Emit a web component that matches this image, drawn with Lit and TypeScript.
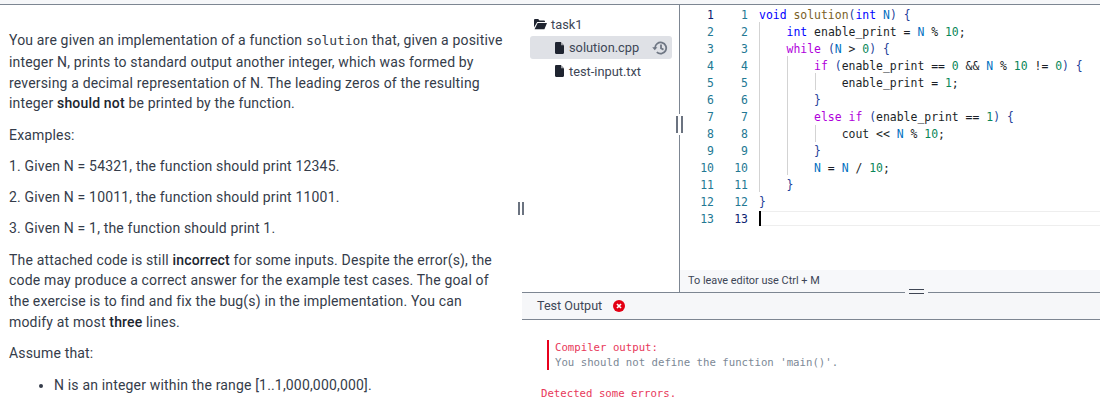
import { LitElement, html, css, svg } from "lit";
import { customElement } from "lit/decorators.js";

type Tok = [string, string];
const code: Tok[][] = [
  [["k", "void"], ["p", " "], ["f", "solution"], ["b", "("], ["k", "int"], ["p", " "], ["n", "N"], ["b", ")"], ["p", " "], ["b", "{"]],
  [["p", "    "], ["k", "int"], ["p", " enable_print = "], ["n", "N"], ["p", " % "], ["d", "10"], ["p", ";"]],
  [["p", "    "], ["c", "while"], ["p", " "], ["b", "("], ["n", "N"], ["p", " > "], ["d", "0"], ["b", ")"], ["p", " "], ["b", "{"]],
  [["p", "        "], ["c", "if"], ["p", " "], ["b", "("], ["p", "enable_print == "], ["d", "0"], ["p", " && "], ["n", "N"], ["p", " % "], ["d", "10"], ["p", " != "], ["d", "0"], ["b", ")"], ["p", " "], ["b", "{"]],
  [["p", "            enable_print = "], ["d", "1"], ["p", ";"]],
  [["p", "        "], ["b", "}"]],
  [["p", "        "], ["c", "else if"], ["p", " "], ["b", "("], ["p", "enable_print == "], ["d", "1"], ["b", ")"], ["p", " "], ["b", "{"]],
  [["p", "            cout << "], ["n", "N"], ["p", " % "], ["d", "10"], ["p", ";"]],
  [["p", "        "], ["b", "}"]],
  [["p", "        "], ["n", "N"], ["p", " = "], ["n", "N"], ["p", " / "], ["d", "10"], ["p", ";"]],
  [["p", "    "], ["b", "}"]],
  [["b", "}"]],
  [],
];

const guides = [
  { left: 11, top: 15, height: 170 },
  { left: 39, top: 49, height: 119 },
  { left: 67, top: 66, height: 17 },
  { left: 67, top: 118, height: 17 },
];

const fileIcon = svg`<svg class="ico" width="11" height="12" viewBox="0 0 11 12"><path fill="#1f2430" d="M1 1.3C1 .6 1.5 0 2.2 0H7l3 3.2v7.6c0 .7-.5 1.2-1.2 1.2H2.2C1.5 12 1 11.5 1 10.8z"/><path fill="#fff" d="M7 0v3.2h3L7.4 0z" opacity=".55"/></svg>`;

@customElement("app-root")
export class AppRoot extends LitElement {
  static styles = css`
    :host { display: block; width: 1100px; height: 409px; overflow: hidden; background: #fff; font-family: Roboto, sans-serif; color: #2a3140; }
    .top { height: 4px; background: #f6f7f9; border-bottom: 1px solid #7d8692; }
    .main { display: grid; grid-template-columns: 522px 1fr; height: 404px; }
    .task { position: relative; padding: 25px 15px 0 9px; font-size: 14px; letter-spacing: .17px; line-height: 20.75px; color: #353c4a; }
    .task p { margin: 0 0 10.5px; }
    .task b { font-weight: 500; color: #20252f; }
    .task code { font-family: "DejaVu Sans Mono", monospace; font-size: 13px; letter-spacing: -.05px; }
    .task ul { margin: 0; padding: 1px 0 0 45px; }
    .v-handle { position: absolute; width: 6px; height: 13px; border-left: 2px solid #6b7380; border-right: 2px solid #6b7380; box-sizing: border-box; }
    .task .v-handle { left: 518px; top: 197px; }
    .right { display: grid; grid-template-rows: 287px 28px 1fr; min-width: 0; }
    .upper { display: grid; grid-template-columns: 158px 1fr; min-height: 0; }
    .tree { padding: 8px 7px 0 8px; font-size: 12.8px; color: #3d4656; border-right: 1px solid #7d8692; position: relative; }
    .tree .v-handle { left: 154px; top: 111px; width: 7px; height: 17px; background: #fff; box-shadow: 0 -2px 0 #fff, 0 2px 0 #fff; }
    .row { display: flex; align-items: center; height: 23px; padding-left: 24px; gap: 4px; }
    .row.folder { padding-left: 4px; gap: 4px; }
    .row.active { background: #dfe1e6; border-radius: 3px; position: relative; padding-left: 24px; }
    .row.plain { height: 24px; }
    .hist { margin-left: auto; margin-right: 4px; }
    .ico { flex: none; }
    .editor { display: grid; grid-template-rows: 1fr 22px; min-height: 0; min-width: 0; }
    .code-area { display: grid; grid-template-columns: 34px 34px 1fr; padding: 1.5px 0 0 0; overflow: hidden; font-family: "DejaVu Sans Mono", monospace; font-size: 11.45px; line-height: 17.08px; }
    .num { text-align: right; color: #237893; }
    .num .on { color: #0b216f; }
    .lines { padding-left: 11px; position: relative; color: #1b1f28; }
    .ln { height: 17.08px; white-space: pre; position: relative; }
    .k { color: #0000ff; }
    .f { color: #795e26; }
    .c { color: #af00db; }
    .n { color: #0070c1; }
    .d { color: #098658; }
    .b { color: #1f3f9a; }
    .guide { position: absolute; width: 1px; background: #d3d3d3; }
    .cur { position: absolute; left: 11px; right: 0; top: 204px; height: 13px; border-top: 1px solid #eee; border-bottom: 1px solid #eee; }
    .caret { position: absolute; left: 11px; top: 204px; width: 1.5px; height: 15px; background: #000; }
    .hint { background: #f7f8fa; font-size: 10.9px; line-height: 22px; padding-left: 8px; color: #3d4656; }
    .tabs { position: relative; display: flex; align-items: center; gap: 11px; background: #f6f7f9; border-top: 1px solid #7d8692; border-bottom: 1px solid #7d8692; padding: 0 0 1px 15px; font-size: 12.6px; color: #3d4656; }
    .h-handle { position: absolute; left: 383px; top: -4px; width: 23px; height: 6px; padding: 0 4px; box-sizing: border-box; background: #f6f7f9; }
    .h-handle i { display: block; height: 3px; border-top: 1px solid #3f4654; border-bottom: 1px solid #3f4654; }
    .output { padding: 20px 0 0 19px; font-family: "DejaVu Sans Mono", monospace; font-size: 10.7px; line-height: 15px; }
    .msg { border-left: 2px solid #e8001c; margin-left: 6px; padding-left: 6px; height: 30px; }
    .red { color: #e8385a; }
    .gray { color: #7c8996; }
    .det { margin-top: 16px; }
  `;

  render() {
    const nums = Array.from({ length: 13 }, (_, i) => i + 1);
    return html`
      <div class="top"></div>
      <div class="main">
        <section class="task">
          <p>You are given an implementation of a function <code>solution</code> that, given a positive integer N, prints to standard output another integer, which was formed by reversing a decimal representation of N. The leading zeros of the resulting integer <b>should not</b> be printed by the function.</p>
          <p>Examples:</p>
          <p>1. Given N = 54321, the function should print 12345.</p>
          <p>2. Given N = 10011, the function should print 11001.</p>
          <p>3. Given N = 1, the function should print 1.</p>
          <p>The attached code is still <b>incorrect</b> for some inputs. Despite the error(s), the code may produce a correct answer for the example test cases. The goal of the exercise is to find and fix the bug(s) in the implementation. You can modify at most <b>three</b> lines.</p>
          <p>Assume that:</p>
          <ul><li>N is an integer within the range [1..1,000,000,000].</li></ul>
          <div class="v-handle"></div>
        </section>
        <section class="right">
          <div class="upper">
            <nav class="tree">
              <div class="row folder">
                <svg class="ico" width="13" height="11" viewBox="0 0 13 11"><path fill="#1f2430" d="M0 1.2C0 .5.5 0 1.2 0h3l1.3 1.5h4.3c.7 0 1.2.5 1.2 1.1v.4H3.2L0 8.6z"/><path fill="#1f2430" d="M3.6 4H13l-2.6 6.2H.6z"/></svg>
                <span>task1</span>
              </div>
              <div class="row active">
                ${fileIcon}<span>solution.cpp</span>
                <svg class="ico hist" width="16" height="14" viewBox="0 0 16 14" fill="none" stroke="#6f7784" stroke-width="1.8"><path d="M3 7a5.6 5.6 0 1 1 1.8 4.2"/><path d="M9 3.6V7.3l2.5 1.3"/><path d="M.2 6.2h5.2L2.8 9.2z" fill="#6f7784" stroke="none"/></svg>
              </div>
              <div class="row plain">${fileIcon}<span>test-input.txt</span></div>
              <div class="v-handle"></div>
            </nav>
            <div class="editor">
              <div class="code-area">
                <div class="num">${nums.map((n) => html`<div class=${n === 1 ? "on" : ""}>${n}</div>`)}</div>
                <div class="num">${nums.map((n) => html`<div class=${n === 13 ? "on" : ""}>${n}</div>`)}</div>
                <div class="lines">
                  <div class="cur"></div>
                  ${guides.map((g) => html`<div class="guide" style="left:${g.left}px;top:${g.top}px;height:${g.height}px"></div>`)}
                  <div class="caret"></div>
                  ${code.map((l) => html`<div class="ln">${l.map(([c, t]) => html`<span class=${c}>${t}</span>`)}</div>`)}
                </div>
              </div>
              <div class="hint">To leave editor use Ctrl + M</div>
            </div>
          </div>
          <div class="tabs">
            <span>Test Output</span>
            <svg width="12" height="12" viewBox="0 0 12 12"><circle cx="6" cy="6" r="6" fill="#e40014"/><path d="M4 4l4 4M8 4l-4 4" stroke="#fff" stroke-width="1.7"/></svg>
            <div class="h-handle"><i></i></div>
          </div>
          <div class="output">
            <div class="msg"><div class="red">Compiler output:</div><div class="gray">You should not define the function 'main()'.</div></div>
            <div class="red det">Detected some errors.</div>
          </div>
        </section>
      </div>
    `;
  }
}
